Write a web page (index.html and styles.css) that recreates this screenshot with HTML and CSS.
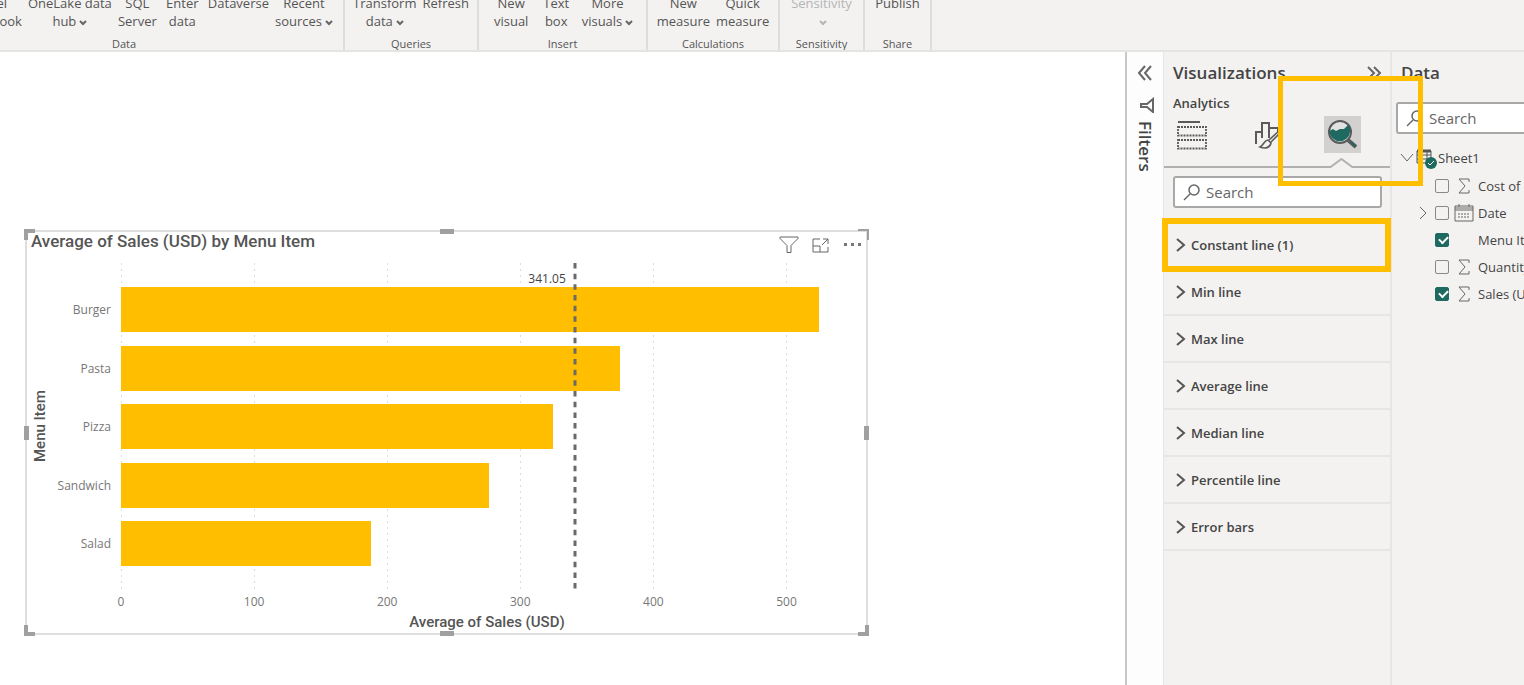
FILE: index.html
```
<!DOCTYPE html>
<html lang="en">
<head>
    <meta charset="UTF-8">
    <meta name="viewport" content="width=device-width, initial-scale=1.0">
    <title>Sales report</title>
    <link rel="stylesheet" href="styles.css">
</head>
<body>

    <header class="ribbon">
        <div class="group group-data">
            <div class="tools">
                <button>Excel<br>workbook</button>
                <button>OneLake data<br>hub<svg class="caret" viewBox="0 0 8 6"><path d="M1 1l3 3 3-3"/></svg></button>
                <button>SQL<br>Server</button>
                <button>Enter<br>data</button>
                <button>Dataverse<br>&nbsp;</button>
                <button>Recent<br>sources<svg class="caret" viewBox="0 0 8 6"><path d="M1 1l3 3 3-3"/></svg></button>
            </div>
            <div class="group-name">Data</div>
        </div>
        <div class="group group-queries">
            <div class="tools">
                <button>Transform<br>data<svg class="caret" viewBox="0 0 8 6"><path d="M1 1l3 3 3-3"/></svg></button>
                <button>Refresh<br>&nbsp;</button>
            </div>
            <div class="group-name">Queries</div>
        </div>
        <div class="group group-insert">
            <div class="tools">
                <button>New<br>visual</button>
                <button>Text<br>box</button>
                <button>More<br>visuals<svg class="caret" viewBox="0 0 8 6"><path d="M1 1l3 3 3-3"/></svg></button>
            </div>
            <div class="group-name">Insert</div>
        </div>
        <div class="group group-calc">
            <div class="tools">
                <button>New<br>measure</button>
                <button>Quick<br>measure</button>
            </div>
            <div class="group-name">Calculations</div>
        </div>
        <div class="group group-sens">
            <div class="tools">
                <button disabled>Sensitivity<br><svg class="caret" viewBox="0 0 8 6"><path d="M1 1l3 3 3-3"/></svg></button>
            </div>
            <div class="group-name">Sensitivity</div>
        </div>
        <div class="group group-share">
            <div class="tools">
                <button>Publish<br>&nbsp;</button>
            </div>
            <div class="group-name">Share</div>
        </div>
    </header>

    <main class="workspace">
        <section class="canvas">
            <div class="visual">
                <i class="handle tl"></i><i class="handle tr"></i><i class="handle bl"></i><i class="handle br"></i>
                <i class="handle top"></i><i class="handle bottom"></i><i class="handle left"></i><i class="handle right"></i>

                <div class="visual-header">
                    <h2>Average of Sales (USD) by Menu Item</h2>
                    <div class="visual-actions">
                        <button aria-label="Filters"><svg width="20" height="18" viewBox="0 0 20 18"><path d="M1 1h18v1.500l-7 7V16.500H8V9.500l-7-7z"/></svg></button>
                        <button aria-label="Focus mode"><svg width="20" height="18" viewBox="0 0 20 18"><path d="M9 3H2v13h15v-5M2 10h7v6M12 3h5v5M17 3l-6 6"/></svg></button>
                        <button aria-label="More options"><svg width="20" height="18" viewBox="0 0 20 18"><path class="dots" d="M1 7h3v3H1zM8 7h3v3H8zM15 7h3v3h-3z"/></svg></button>
                    </div>
                </div>

                <div class="chart">
                    <div class="y-title">Menu Item</div>
                    <div class="categories">
                        <span>Burger</span>
                        <span>Pasta</span>
                        <span>Pizza</span>
                        <span>Sandwich</span>
                        <span>Salad</span>
                    </div>
                    <div class="plot">
                        <i class="gridline" style="left: 0%"></i>
                        <i class="gridline" style="left: 18.18%"></i>
                        <i class="gridline" style="left: 36.36%"></i>
                        <i class="gridline" style="left: 54.55%"></i>
                        <i class="gridline" style="left: 72.73%"></i>
                        <i class="gridline" style="left: 90.91%"></i>
                        <div class="bar" style="width: 95.4%"></div>
                        <div class="bar" style="width: 68.2%"></div>
                        <div class="bar" style="width: 59%"></div>
                        <div class="bar" style="width: 50.3%"></div>
                        <div class="bar" style="width: 34.1%"></div>
                        <div class="constant" style="left: 62%">
                            <span>341.05</span>
                            <svg width="4" height="326" viewBox="0 0 4 326"><path d="M2 0v326"/></svg>
                        </div>
                    </div>
                    <div class="x-axis">
                        <span>0</span><span>100</span><span>200</span><span>300</span><span>400</span><span>500</span>
                    </div>
                    <div class="x-title">Average of Sales (USD)</div>
                </div>
            </div>
        </section>

        <aside class="filters">
            <button aria-label="Expand filters"><svg width="16" height="16" viewBox="0 0 16 16"><path d="M8 1L2 8l6 7M14 1L8 8l6 7"/></svg></button>
            <svg class="funnel" width="16" height="16" viewBox="0 0 16 16"><path d="M14 2v13L8 10H2V7h6z"/></svg>
            <span>Filters</span>
        </aside>

        <aside class="viz">
            <div class="pane-title">
                <h2>Visualizations</h2>
                <button aria-label="Collapse"><svg width="16" height="14" viewBox="0 0 16 14"><path d="M2 1l6 6-6 6M8 1l6 6-6 6"/></svg></button>
            </div>
            <h3>Analytics</h3>
            <div class="tabs">
                <button aria-label="Build visual">
                    <svg width="30" height="30" viewBox="0 0 30 30"><path d="M1 2h22" stroke-width="2"/><path d="M1 7h28v8.500H1zM1 20h28v8.500H1z" stroke-width="1.800" stroke-dasharray="2 1"/></svg>
                </button>
                <button aria-label="Format visual">
                    <svg width="30" height="30" viewBox="0 0 30 30"><path d="M4 24V12h6M10 18V3h7v15M17 8h9v4" stroke-width="2"/><path d="M28 10L17 20M28 13L19 22" stroke-width="1.600"/><path d="M16 20c-4 0-4 5-8 7 5 2 10 1 11-4z" stroke-width="1.600"/></svg>
                </button>
                <button class="selected" aria-label="Analytics">
                    <svg width="30" height="30" viewBox="0 0 30 30"><circle cx="12" cy="12" r="11" fill="#e2e2e2" stroke-width="2"/><path d="M1.500 11L5 9l3 2 4-2 4 0 4-4 2 3v4a10.300 10.300 0 0 1-20.500 0z" fill="#1e6a60" stroke="none"/><path d="M20 20l8 7" stroke-width="4"/><path d="M23 22l4 4" stroke="#1e6a60" stroke-width="2"/></svg>
                </button>
            </div>
            <svg class="notch" width="228" height="10" viewBox="0 0 228 10"><path d="M0 9h168l11-8 11 8h38"/></svg>
            <label class="search">
                <svg width="18" height="18" viewBox="0 0 18 18"><circle cx="11" cy="7" r="5"/><path d="M7 11l-6 6"/></svg>
                <input type="text" placeholder="Search" aria-label="Search analytics">
            </label>
            <div class="cards">
                <button class="marked"><svg class="chevron" width="10" height="14" viewBox="0 0 10 14"><path d="M1 1l7 6-7 6"/></svg>Constant line (1)</button>
                <button><svg class="chevron" width="10" height="14" viewBox="0 0 10 14"><path d="M1 1l7 6-7 6"/></svg>Min line</button>
                <button><svg class="chevron" width="10" height="14" viewBox="0 0 10 14"><path d="M1 1l7 6-7 6"/></svg>Max line</button>
                <button><svg class="chevron" width="10" height="14" viewBox="0 0 10 14"><path d="M1 1l7 6-7 6"/></svg>Average line</button>
                <button><svg class="chevron" width="10" height="14" viewBox="0 0 10 14"><path d="M1 1l7 6-7 6"/></svg>Median line</button>
                <button><svg class="chevron" width="10" height="14" viewBox="0 0 10 14"><path d="M1 1l7 6-7 6"/></svg>Percentile line</button>
                <button><svg class="chevron" width="10" height="14" viewBox="0 0 10 14"><path d="M1 1l7 6-7 6"/></svg>Error bars</button>
            </div>
        </aside>

        <aside class="data">
            <h2>Data</h2>
            <label class="search">
                <svg width="18" height="18" viewBox="0 0 18 18"><circle cx="11" cy="7" r="5"/><path d="M7 11l-6 6"/></svg>
                <input type="text" placeholder="Search" aria-label="Search fields">
            </label>
            <div class="table-name">
                <svg width="14" height="10" viewBox="0 0 14 10"><path d="M1 1l6 7 6-7"/></svg>
                <svg width="22" height="22" viewBox="0 0 22 22"><path d="M1 4h14v12H1zM1 8h14M1 12h14M6 5v11M11 5v11" stroke="#555"/><path d="M1 4h14" stroke="#555" stroke-width="3"/><circle cx="15" cy="16" r="6" fill="#1e6a60" stroke="none"/><path d="M12 16l2 2 4-4" stroke="#fff"/></svg>
                <span>Sheet1</span>
            </div>
            <div class="field">
                <i class="twist"></i><input type="checkbox" id="f1">
                <svg width="20" height="18" viewBox="0 0 20 18"><path d="M15 5V2H5l6 7-6 7h10v-3"/></svg>
                <label for="f1">Cost of Goods</label>
            </div>
            <div class="field">
                <i class="twist"><svg width="9" height="14" viewBox="0 0 9 14"><path d="M1 1l6 6-6 6"/></svg></i><input type="checkbox" id="f2">
                <svg width="20" height="18" viewBox="0 0 20 18"><path d="M1 2h18v15H1zM1 4h18M1 6h18M5 0v3M15 0v3"/><path d="M4 10h12M4 13h12" stroke-dasharray="2 1"/></svg>
                <label for="f2">Date</label>
            </div>
            <div class="field">
                <i class="twist"></i><input type="checkbox" id="f3" checked>
                <svg width="20" height="18" viewBox="0 0 20 18"></svg>
                <label for="f3">Menu Item</label>
            </div>
            <div class="field">
                <i class="twist"></i><input type="checkbox" id="f4">
                <svg width="20" height="18" viewBox="0 0 20 18"><path d="M15 5V2H5l6 7-6 7h10v-3"/></svg>
                <label for="f4">Quantity</label>
            </div>
            <div class="field">
                <i class="twist"></i><input type="checkbox" id="f5" checked>
                <svg width="20" height="18" viewBox="0 0 20 18"><path d="M15 5V2H5l6 7-6 7h10v-3"/></svg>
                <label for="f5">Sales (USD)</label>
            </div>
        </aside>

        <div class="callout"></div>
    </main>

</body>
</html>
```
FILE: styles.css
```
* { box-sizing: border-box; }
body {
    margin: 0; height: 100vh; overflow: hidden; display: flex; flex-direction: column;
    font-family: "Open Sans", "Noto Sans", sans-serif; font-size: 13px; color: #444; background: #fff;
}
h2, h3 { margin: 0; font-weight: 600; }
button { padding: 0; border: none; background: none; font: inherit; color: inherit; cursor: pointer; }
svg { fill: none; stroke: #666; flex: none; display: block; }

/* ribbon */
.ribbon {
    display: flex; align-items: flex-end; flex: none; height: 52px; overflow: hidden;
    background: #f3f2f1; border-bottom: 2px solid #e4e4e2; color: #555;
}
.group { flex: none; border-right: 2px solid #dcdedc; }
.group-data { width: 440px; margin-left: -95px; }
.group-queries { width: 134px; }
.group-insert { width: 169px; }
.group-calc { width: 132px; }
.group-sens { width: 85px; }
.group-share { width: 67px; }
.tools { display: flex; justify-content: center; }
.group-data .tools { justify-content: flex-end; padding-right: 7px; }
.tools button { padding: 0 3px; min-width: 45px; line-height: 18px; white-space: nowrap; flex: none; }
.tools button:disabled { color: #b5b5b5; }
.tools button:disabled .caret { stroke: #b5b5b5; }
.caret { display: inline-block; width: 8px; height: 6px; margin-left: 3px; stroke-width: 2; vertical-align: middle; }
.group-name { padding-top: 8px; font-size: 11px; line-height: 12px; text-align: center; }

.workspace { position: relative; display: flex; flex: 1; min-height: 0; }

/* report canvas */
.canvas { flex: 1; min-width: 0; padding: 178px 257px 0 25px; }
.visual { position: relative; border: 2px solid #dedede; }
.visual-header { display: flex; justify-content: space-between; height: 31px; padding-left: 4px; }
.visual-header h2 { font: 500 17px/18px Roboto, sans-serif; color: #555; }
.visual-actions { display: flex; align-items: flex-start; gap: 12px; padding: 4px 3px 0 0; }
.visual-actions .dots { fill: #777; stroke: none; }
.chart { display: grid; grid-template-columns: 21px 60px 1fr; column-gap: 5px; padding: 0 13px 1px 3px; }
.y-title, .x-title { font: 500 15px/20px Roboto, sans-serif; color: #555; text-align: center; }
.y-title { writing-mode: vertical-rl; transform: rotate(180deg); }
.categories, .plot { display: flex; flex-direction: column; justify-content: space-between; padding: 24px 0; }
.categories { padding-right: 5px; font-size: 12px; color: #777; text-align: right; }
.categories span { line-height: 45px; }
.plot { position: relative; height: 327px; }
.bar { position: relative; height: 45px; background: #ffbf00; }
.gridline {
    position: absolute; top: 0; bottom: 0; width: 1px;
    background: repeating-linear-gradient(#ddd 0 2px, transparent 2px 6px);
}
.constant { position: absolute; top: 0; height: 100%; }
.constant svg { stroke: #6a6a6a; stroke-width: 3; stroke-dasharray: 5.5 5.17; margin-left: -2px; }
.constant span { position: absolute; right: 11px; top: 7px; font-size: 12px; line-height: 18px; }
.x-axis {
    grid-column: 3; display: grid; grid-template-columns: repeat(6, 1fr);
    margin: 2px 0 0 calc(-100% / 11);
    font-size: 12px; line-height: 20px; color: #777; text-align: center;
}
.x-title { grid-column: 3; }

/* selection handles */
.handle { position: absolute; background: #a0a0a0; }
.tl, .tr, .bl, .br { width: 11px; height: 11px; background: none; border: 0 solid #a0a0a0; }
.tl { top: -3px; left: -3px; border-width: 4px 0 0 4px; }
.tr { top: -3px; right: -3px; border-width: 2px 2px 0 0; }
.bl { bottom: -3px; left: -3px; border-width: 0 0 4px 4px; }
.br { bottom: -3px; right: -3px; border-width: 0 4px 4px 0; }
.top, .bottom { left: 50%; width: 14px; height: 5px; margin-left: -7px; }
.left, .right { top: 50%; width: 5px; height: 14px; margin-top: -7px; }
.top { top: -3px; }
.bottom { bottom: -3px; }
.left { left: -3px; }
.right { right: -3px; }

/* filters rail */
.filters {
    display: flex; flex-direction: column; align-items: center; flex: none; width: 38px;
    padding-top: 13px; border-left: 2px solid #c8c8c8; background: #fdfdfd;
}
.filters svg { stroke-width: 2; }
.funnel { margin: 16px 0 8px 3px; }
.filters span { writing-mode: vertical-rl; font-size: 17px; font-weight: 600; line-height: 20px; }

/* visualizations */
.viz { flex: none; width: 229px; background: #f3f2f1; border: solid #e6e6e4; border-width: 0 2px 0 1px; }
.pane-title { display: flex; justify-content: space-between; align-items: center; padding: 10px 8px 0 9px; }
.pane-title svg { stroke-width: 2; }
.pane-title h2, .data h2 { font-size: 17px; line-height: 22px; }
.viz h3 { padding-left: 9px; margin-top: 10px; font-size: 13px; line-height: 18px; }
.tabs { display: flex; justify-content: space-between; padding: 4px 29px 0 9px; }
.tabs button { display: flex; align-items: center; justify-content: center; width: 37px; height: 37px; }
.tabs svg { stroke: #5a5a5a; }
.tabs .selected { background: #d2d1d0; }
.notch { width: 100%; margin-top: 5px; stroke: #b0b0b0; stroke-width: 2; }
.search {
    display: flex; align-items: center; height: 32px; margin: 8px 8px 0 9px; padding-left: 8px;
    background: #fff; border: 2px solid #a8a8a6; border-radius: 3px;
}
.search svg { stroke-width: 1.5; }
.search input {
    flex: 1; min-width: 0; margin-left: 5px; padding: 0; border: none; outline: none; background: none;
    font: inherit; font-size: 15px; color: #555;
}
.search input::placeholder { color: #666; opacity: 1; }
.cards { margin-top: 14px; }
.cards button {
    position: relative; display: flex; align-items: center; gap: 5px; width: 100%; height: 47px;
    padding-left: 12px; border-bottom: 2px solid #e6e6e4; font-weight: 600; font-size: 13px;
}
.chevron { stroke: #555; stroke-width: 2; }
.marked::after { content: ""; position: absolute; inset: -4px -1px -5px -2px; border: 6px solid #ffbf00; }

/* data */
.data { flex: none; width: 132px; overflow: hidden; background: #f3f2f1; padding-top: 10px; white-space: nowrap; }
.data h2 { padding-left: 9px; }
.data .search { margin: 18px -8px 0 4px; }
.table-name { display: flex; align-items: center; height: 28px; margin-top: 10px; padding-left: 8px; }
.table-name svg + svg { margin-left: 2px; }
.field { display: flex; align-items: center; height: 27px; padding-left: 27px; }
.twist { flex: none; width: 16px; }
.field input {
    appearance: none; position: relative; flex: none; width: 14px; height: 14px; margin: 0 5px 0 0;
    border: 1px solid #888; border-radius: 2px;
}
.field input:checked { background: #1e6a60; border-color: #1e6a60; }
.field input:checked::after {
    content: ""; position: absolute; left: 3px; top: 2px; width: 7px; height: 4px;
    border: solid #fff; border-width: 0 0 2px 2px; transform: rotate(-45deg);
}
.field label { margin-left: 4px; }

/* highlight across both panes */
.callout { position: absolute; top: 24px; right: 101px; width: 145px; height: 110px; border: 5px solid #ffbf00; }
```
